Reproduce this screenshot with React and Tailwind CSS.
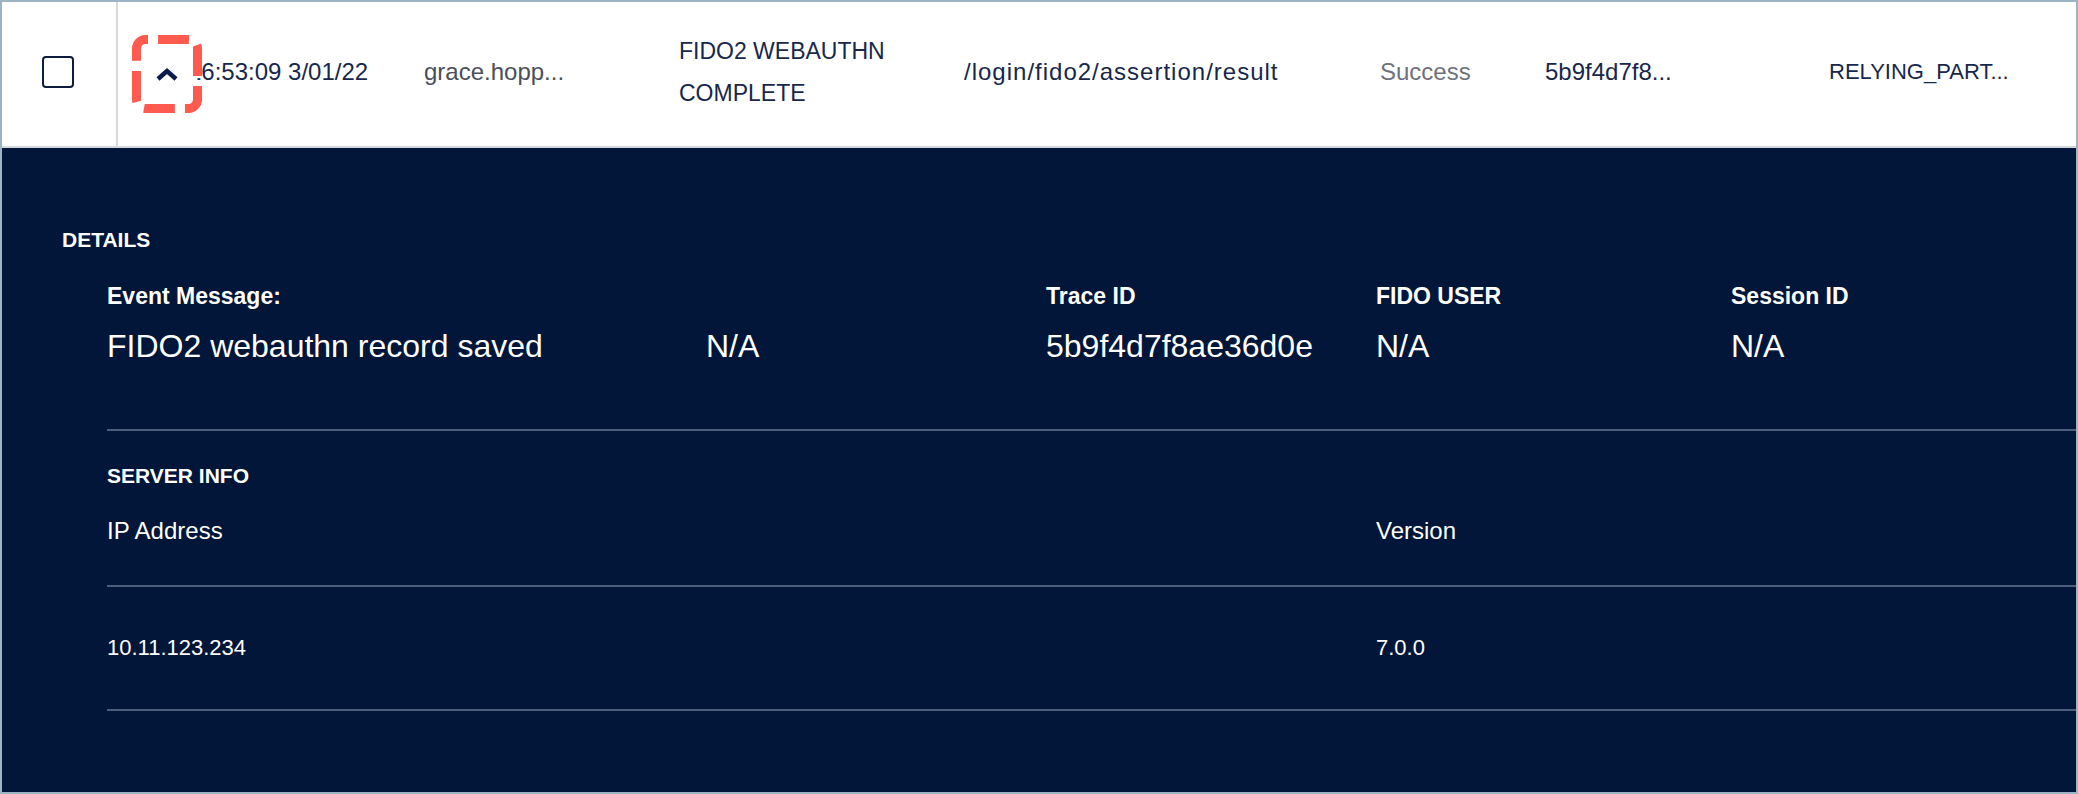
import React from 'react'

const font = { fontFamily: '"Liberation Sans", Arial, sans-serif' }

function Chevron() {
  return (
    <svg className="relative z-20" width="24" height="14" viewBox="0 0 24 14" fill="none">
      <polyline points="3,12 12,4 21,12" stroke="#0b1b4d" strokeWidth="4.5" strokeLinecap="butt" strokeLinejoin="miter" />
    </svg>
  )
}

function FocusRing() {
  // dashed focus outline around the expand toggle
  return (
    <svg
      className="pointer-events-none absolute -left-[16px] -top-[16px] z-10"
      width="70"
      height="78"
      viewBox="0 0 70 78"
    >
      <rect
        x="4.5"
        y="4.5"
        width="61"
        height="69"
        rx="9"
        fill="#ffffff"
        stroke="#ff5a4e"
        strokeWidth="9"
        strokeDasharray="31 10.05"
        strokeDashoffset="28.5"
      />
    </svg>
  )
}

function Cell({ className = '', children }) {
  return <div className={`flex items-center pb-[4px] ${className}`}>{children}</div>
}

export default function App() {
  return (
    <div style={font} className="w-[2078px] h-[794px] border-2 border-[#9cb4c4] bg-white overflow-hidden">
      {/* table row */}
      <div className="flex h-[146px] items-stretch border-b-2 border-[#d3d8dd] bg-white text-[24px] leading-[28px] text-[#18274c]">
        <Cell className="w-[116px] shrink-0 border-r-2 border-[#d3d8dd] pl-[40px]">
          <div className="h-[32px] w-[32px] rounded-[4px] border-2 border-[#0d1b3e] bg-white" />
        </Cell>
        <div className="relative z-10 flex w-[68px] shrink-0 items-center pl-[30px]">
          <button className="relative flex h-[46px] w-[38px] shrink-0 items-center justify-center">
            <FocusRing />
            <Chevron />
          </button>
        </div>
        <Cell className="w-[238px] shrink-0 pl-[2px]">
          <span className="whitespace-nowrap">16:53:09 3/01/22</span>
        </Cell>
        <Cell className="w-[255px] shrink-0 text-[#4a4f59]">grace.hopp...</Cell>
        <Cell className="w-[285px] shrink-0 pr-[20px]">
          <span className="text-[23px] leading-[42px]">FIDO2 WEBAUTHN COMPLETE</span>
        </Cell>
        <Cell className="w-[416px] shrink-0">
          <span className="tracking-[1px]">/login/fido2/assertion/result</span>
        </Cell>
        <Cell className="w-[165px] shrink-0 text-[#6d717b]">Success</Cell>
        <Cell className="w-[284px] shrink-0">5b9f4d7f8...</Cell>
        <Cell className="flex-1 text-[22px]">RELYING_PART...</Cell>
      </div>

      {/* expanded details */}
      <div className="h-[644px] bg-[#011638] pl-[60px] pt-[80px] text-white">
        <div className="text-[21px] font-bold leading-[24px]">DETAILS</div>

        <div className="ml-[45px]">
          <div className="mt-[30px] grid grid-cols-[599px_340px_330px_355px_1fr]">
            <div className="text-[23px] font-bold leading-[28px]">Event Message:</div>
            <div />
            <div className="text-[23px] font-bold leading-[28px]">Trace ID</div>
            <div className="text-[23px] font-bold leading-[28px]">FIDO USER</div>
            <div className="text-[23px] font-bold leading-[28px]">Session ID</div>

            <div className="mt-[16px] text-[32px] leading-[40px]">FIDO2 webauthn record saved</div>
            <div className="mt-[16px] text-[32px] leading-[40px]">N/A</div>
            <div className="mt-[16px] text-[32px] leading-[40px]">5b9f4d7f8ae36d0e</div>
            <div className="mt-[16px] text-[32px] leading-[40px]">N/A</div>
            <div className="mt-[16px] text-[32px] leading-[40px]">N/A</div>
          </div>

          <div className="mt-[63px] h-[2px] bg-[#4b5d78]" />

          <div className="mt-[33px] text-[21px] font-bold leading-[24px]">SERVER INFO</div>

          <div className="mt-[29px] grid grid-cols-[1269px_1fr] text-[24px] leading-[28px]">
            <div>IP Address</div>
            <div>Version</div>
          </div>

          <div className="mt-[40px] h-[2px] bg-[#4b5d78]" />

          <div className="mt-[47px] grid grid-cols-[1269px_1fr] text-[22px] leading-[28px]">
            <div>10.11.123.234</div>
            <div>7.0.0</div>
          </div>

          <div className="mt-[47px] h-[2px] bg-[#4b5d78]" />
        </div>
      </div>
    </div>
  )
}
